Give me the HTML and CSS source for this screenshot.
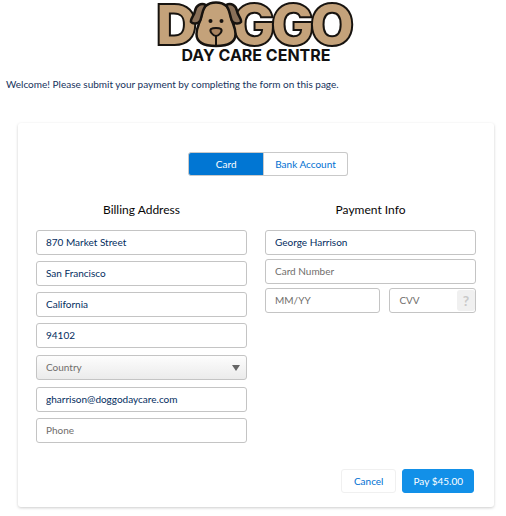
FILE: index.html
```html
<!DOCTYPE html>
<html lang="en">
<head>
  <meta charset="UTF-8" />
  <meta name="viewport" content="width=device-width, initial-scale=1.0"/>
  <title>Doggo Day Care Centre - Payment</title>
  <link rel="stylesheet" href="styles.css">
</head>
<body>
  <header class="header">
    <svg class="logo" width="212" height="68" viewBox="0 0 212 68" role="img" aria-label="Doggo Day Care Centre">
      <g class="logo-letters">
        <text x="6" y="45">D</text>
        <text x="82" y="45">G</text>
        <text x="121" y="45">G</text>
        <text x="160" y="45">O</text>
      </g>
      <!-- dog head -->
      <g stroke="#17130f" stroke-width="2.5" stroke-linecap="round" stroke-linejoin="round">
        <path fill="#c4a27a" d="M66 2.5C57 2.5 52 8 51 17C50 23 46.500 27 46.500 34C46.500 42 54 46 66 46C78 46 85.500 42 85.500 34C85.500 27 82 23 81 17C80 8 75 2.500 66 2.500Z"/>
        <path fill="#8a7058" d="M56 5C51 2.500 46 5 45 11C44.500 15 40 19 41 22C43 24.500 48 24 50 21C52 17 52 10 56 5Z"/>
        <path fill="#8a7058" d="M76 5C81 2.500 86 5 87 11C87.500 15 92 19 91 22C89 24.500 84 24 82 21C80 17 80 10 76 5Z"/>
        <path fill="#a9835f" stroke-width="2" d="M61 29C63 27.500 69 27.500 71 29C73 31 69 36 66 36C63 36 59 31 61 29Z"/>
        <path fill="none" stroke-width="2" d="M66 36V45"/>
      </g>
      <circle cx="60.500" cy="21" r="2" fill="#17130f"/>
      <circle cx="71.500" cy="21" r="2" fill="#17130f"/>
      <text class="logo-tagline" x="106" y="61">DAY CARE CENTRE</text>
    </svg>
  </header>

  <p class="welcome">Welcome! Please submit your payment by completing the form on this page.</p>

  <form class="card">
    <div class="tabs">
      <button type="button" class="tab active">Card</button>
      <button type="button" class="tab">Bank Account</button>
    </div>

    <div class="columns">
      <section class="column billing">
        <h2>Billing Address</h2>
        <input type="text" aria-label="Street" value="870 Market Street" />
        <input type="text" aria-label="City" value="San Francisco" />
        <input type="text" aria-label="State" value="California" />
        <input type="text" aria-label="Postal code" value="94102" />
        <div class="select">
          <select aria-label="Country">
            <option>Country</option>
          </select>
        </div>
        <input type="email" aria-label="Email" value="gharrison@doggodaycare.com" />
        <input type="tel" aria-label="Phone" placeholder="Phone" />
      </section>

      <section class="column payment">
        <h2>Payment Info</h2>
        <input type="text" aria-label="Name on card" value="George Harrison" />
        <input type="text" aria-label="Card number" placeholder="Card Number" />
        <div class="row">
          <input type="text" aria-label="Expiry date" placeholder="MM/YY" />
          <div class="cvv">
            <input type="text" aria-label="CVV" placeholder="CVV" />
            <button type="button" class="help" aria-label="What is a CVV?">?</button>
          </div>
        </div>
      </section>
    </div>

    <div class="actions">
      <button type="button" class="btn">Cancel</button>
      <button type="submit" class="btn pay">Pay $45.00</button>
    </div>
  </form>
</body>
</html>
```
FILE: styles.css
```css
* {
  box-sizing: border-box;
}

body {
  font-family: Lato, "Open Sans", sans-serif;
  font-size: 10px;
  line-height: 14px;
  margin: 0;
  padding-left: 6px;
  background: #fff;
  color: #16325c;
}

.header {
  display: flex;
  justify-content: center;
}

.logo {
  overflow: visible;
}

.logo-letters text {
  font-family: Inter, sans-serif;
  font-size: 57px;
  font-weight: 900;
  fill: #c4a27a;
  stroke: #17130f;
  stroke-width: 2px;
}

.logo-tagline {
  font-family: Inter, sans-serif;
  font-size: 16px;
  font-weight: 700;
  text-anchor: middle;
  fill: #111;
}

.welcome {
  margin: 9px 0 32px;
}

.card {
  margin: 0 12px 8px;
  padding: 29px 18px 14px;
  border-radius: 3px;
  box-shadow: 0 1px 3px rgba(0, 0, 0, 0.2);
}

.tabs {
  display: flex;
  justify-content: center;
  padding-left: 24px;
}

button,
input,
select {
  font: inherit;
}

.tab {
  height: 24px;
  padding: 0 11px;
  border: 1px solid #c9c9c9;
  border-left: none;
  border-radius: 0 3px 3px 0;
  background: #fff;
  color: #0070d2;
  cursor: pointer;
}

.tab.active {
  min-width: 76px;
  border-left: 1px solid #c9c9c9;
  border-radius: 3px 0 0 3px;
  background: #0176d3;
  color: #fff;
}

.columns {
  display: flex;
  gap: 18px;
  margin-top: 25px;
}

.column {
  flex: 1;
  min-width: 0;
  display: flex;
  flex-direction: column;
}

.billing {
  gap: 6px;
}

.payment {
  gap: 4px;
}

h2 {
  margin: 0;
  font-size: 12px;
  font-weight: 400;
  line-height: 18px;
  text-align: center;
  color: #080707;
}

.billing h2 {
  padding-bottom: 5px;
}

.payment h2 {
  padding-bottom: 7px;
}

input,
select {
  width: 100%;
  height: 25px;
  padding: 0 9px 2px;
  border: 1px solid #c4c4c4;
  border-radius: 3px;
  background: #fff;
  color: #032d60;
}

input::placeholder {
  color: #706e6b;
  opacity: 1;
}

.select {
  position: relative;
  display: flex;
  margin: 1px 0;
}

select {
  appearance: none;
  background: linear-gradient(#fdfdfd, #ebebeb);
  color: #706e6b;
}

.select::after {
  content: "";
  position: absolute;
  top: 10px;
  right: 7px;
  border: 4px solid transparent;
  border-top: 6px solid #666;
  border-bottom: none;
  pointer-events: none;
}

.row {
  display: grid;
  grid-template-columns: 4fr 3fr;
  gap: 9px;
}

.cvv {
  position: relative;
}

.help {
  position: absolute;
  top: 2px;
  right: 1px;
  width: 18px;
  height: 21px;
  padding: 0;
  border: none;
  border-radius: 3px;
  background: #f0f0f0;
  color: #c9c9c9;
  font-size: 14px;
  font-weight: 700;
}

.actions {
  display: flex;
  justify-content: flex-end;
  gap: 6px;
  margin-top: 26px;
  padding-right: 2px;
}

.btn {
  height: 24px;
  padding: 0 12px;
  border: 1px solid #f0f0f0;
  border-radius: 3px;
  background: #fff;
  color: #0070d2;
  cursor: pointer;
}

.btn.pay {
  padding: 0 10px;
  border-color: #1290e8;
  background: #1290e8;
  color: #fff;
}
```
